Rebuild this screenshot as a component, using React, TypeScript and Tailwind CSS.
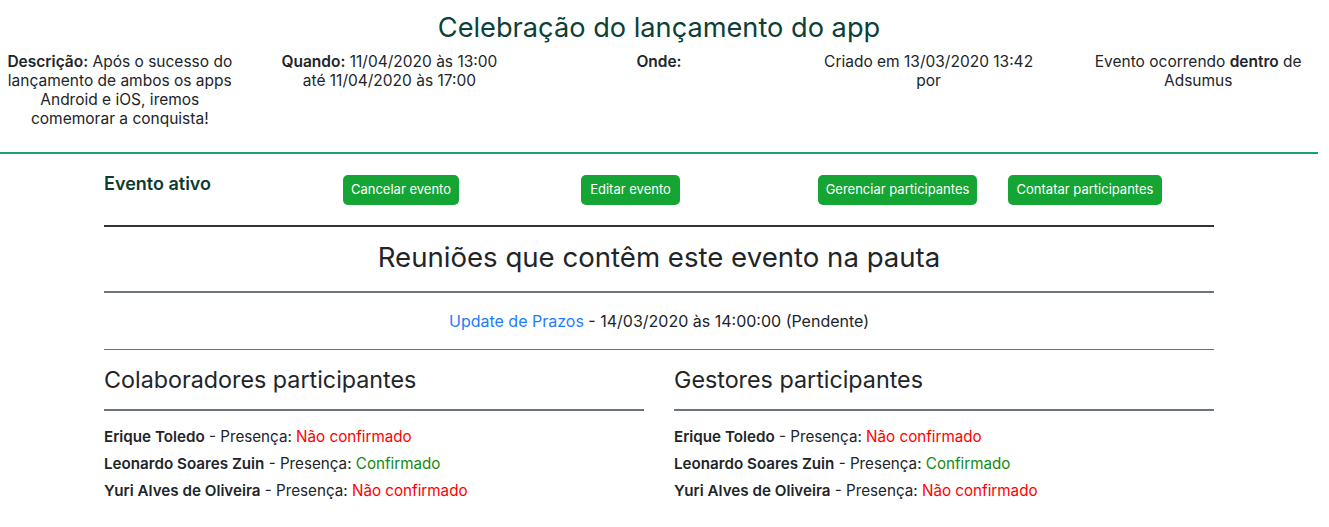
const info = [
  { label: 'Descrição:', text: 'Após o sucesso do lançamento de ambos os apps Android e iOS, iremos comemorar a conquista!' },
  { label: 'Quando:', text: '11/04/2020 às 13:00 até 11/04/2020 às 17:00' },
  { label: 'Onde:', text: '' },
];

const participants = [
  { name: 'Erique Toledo', confirmed: false },
  { name: 'Leonardo Soares Zuin', confirmed: true },
  { name: 'Yuri Alves de Oliveira', confirmed: false },
];

function ParticipantList({ title }: { title: string }) {
  return (
    <div className="flex flex-col w-[540px]">
      <h3 className="text-[23.3px] leading-[29px] text-[#212529]">{title}</h3>
      <div className="h-[2px] bg-[#6c757d] mt-[15px] mb-[12px]" />
      {participants.map((p) => (
        <p key={p.name} className="text-[15.2px] leading-[27px] text-[#212529]">
          <span className="font-semibold">{p.name}</span> - Presença:{' '}
          {p.confirmed ? (
            <span className="text-[#128a12]">Confirmado</span>
          ) : (
            <span className="text-[#ff0000]">Não confirmado</span>
          )}
        </p>
      ))}
    </div>
  );
}

export default function App() {
  return (
    <div className="w-[1318px] overflow-hidden bg-white font-['Inter',sans-serif] text-[#212529]">
      {/* Header */}
      <h1 className="text-center text-[27.2px] leading-[34px] text-[#0b4136] pt-[11px]">
        Celebração do lançamento do app
      </h1>

      <div className="ml-[-15px] w-[1348px] grid grid-cols-5 mt-[7px] pb-[24px] text-[15.5px] leading-[19px]">
        {info.map((item) => (
          <div key={item.label} className="px-[15px] text-center">
            <span className="font-semibold">{item.label}</span> {item.text}
          </div>
        ))}
        <div className="px-[15px] text-center">
          Criado em 13/03/2020 13:42
          <br />
          por
        </div>
        <div className="px-[15px] text-center">
          Evento ocorrendo <span className="font-semibold">dentro</span> de Adsumus
        </div>
      </div>

      <div className="h-[2px] bg-[#17a07a]" />

      {/* Body */}
      <div className="ml-[104px] w-[1110px] flex flex-col">
        <div className="flex items-start pt-[21px]">
          <p className="w-[239px] text-[18px] leading-[22px] font-semibold text-[#0b3b2f] mt-[-2px]">Evento ativo</p>
          <button className="w-[116px] h-[30px] rounded-[5px] bg-[#15a535] text-white text-[13px]">Cancelar evento</button>
          <button className="ml-[122px] w-[99px] h-[30px] rounded-[5px] bg-[#15a535] text-white text-[13px]">Editar evento</button>
          <button className="ml-[138px] w-[159px] h-[30px] rounded-[5px] bg-[#15a535] text-white text-[13px]">Gerenciar participantes</button>
          <button className="ml-[31px] w-[154px] h-[30px] rounded-[5px] bg-[#15a535] text-white text-[13px]">Contatar participantes</button>
        </div>

        <div className="h-[2px] bg-[#333333] mt-[20px]" />

        <h2 className="text-center text-[27.6px] leading-[34px] mt-[13px]">Reuniões que contêm este evento na pauta</h2>

        <div className="h-[2px] bg-[#6c757d] mt-[17px]" />

        <p className="text-center text-[16px] leading-[20px] mt-[18px]">
          <a className="text-[#1e7bff]">Update de Prazos</a> - 14/03/2020 às 14:00:00 (Pendente)
        </p>

        <div className="h-[1px] bg-[#17a07a] mt-[18px]" />

        <div className="flex justify-between mt-[15px]">
          <ParticipantList title="Colaboradores participantes" />
          <ParticipantList title="Gestores participantes" />
        </div>
      </div>
    </div>
  );
}
